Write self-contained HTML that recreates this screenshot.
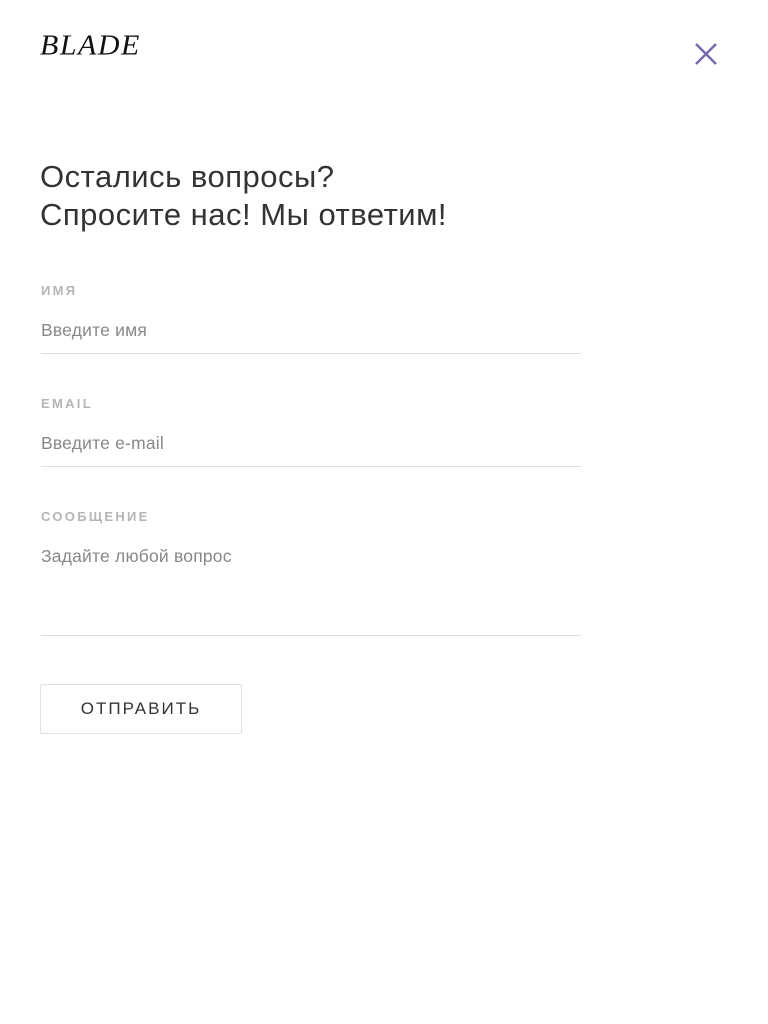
<!DOCTYPE html>
<html><head><meta charset="utf-8"><style>
body{margin:0;width:768px;height:1024px;background:#fff;font-family:"Liberation Sans",sans-serif;position:relative;overflow:hidden}
.logo{position:absolute;left:40px;top:28px;font-family:"Liberation Serif",serif;font-style:italic;font-size:30px;color:#111;letter-spacing:1.5px;line-height:36px;transform:scaleY(0.95)}
.x{position:absolute;left:694px;top:42px}
h1{position:absolute;left:40px;top:158px;margin:0;font-weight:normal;font-size:31px;letter-spacing:0.5px;line-height:38px;color:#333}
.lbl{position:absolute;left:41px;font-size:13px;letter-spacing:2.3px;color:#b5b5b5;font-weight:bold}
.ph{position:absolute;left:41px;font-size:17.5px;color:#888;letter-spacing:0.2px}
.line{position:absolute;left:41px;width:540px;height:1px;background:#ddd}
.btn{position:absolute;left:40px;top:684px;width:202px;height:50px;border:1px solid #dde0e4;border-radius:2px;box-sizing:border-box;text-align:center;line-height:48px;font-size:17px;letter-spacing:2px;color:#333}
</style></head><body>
<div class="logo">BLADE</div>
<svg class="x" width="24" height="24" viewBox="0 0 24 24"><path d="M2 2L22 22M22 2L2 22" stroke="#7a68b0" stroke-width="2.5"/></svg>
<h1>Остались вопросы?<br>Спросите нас! Мы ответим!</h1>
<div class="lbl" style="top:283px">ИМЯ</div>
<div class="ph" style="top:320px">Введите имя</div>
<div class="line" style="top:353px"></div>
<div class="lbl" style="top:396px">EMAIL</div>
<div class="ph" style="top:433px">Введите e-mail</div>
<div class="line" style="top:466px"></div>
<div class="lbl" style="top:509px">СООБЩЕНИЕ</div>
<div class="ph" style="top:546px">Задайте любой вопрос</div>
<div class="line" style="top:635px"></div>
<div class="btn">ОТПРАВИТЬ</div>
</body></html>
